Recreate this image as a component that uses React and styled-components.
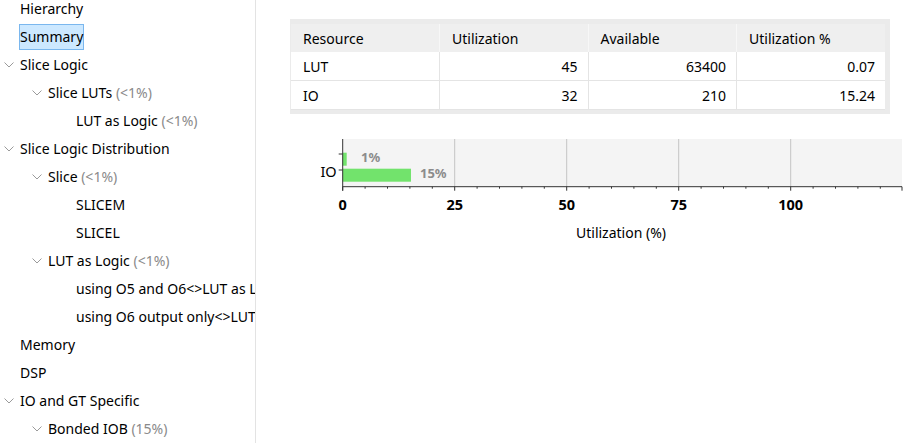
import React from 'react';
import styled, { createGlobalStyle } from 'styled-components';

const Global = createGlobalStyle`
  html, body { margin: 0; padding: 0; background: #fff; }
  body { font-family: "Noto Sans", "Open Sans", sans-serif; color: #000; overflow: hidden; }
`;

const Page = styled.div`
  display: flex;
  width: 924px;
  height: 443px;
  overflow: hidden;
`;

const Sidebar = styled.div`
  width: 255px;
  flex: none;
  border-right: 1px solid #e3e3e3;
  overflow: hidden;
`;

const Tree = styled.ul`
  list-style: none;
  margin: -5px 0 0 0;
  padding: 0;
`;

const Node = styled.li`
  height: 28px;
  display: flex;
  align-items: center;
  padding-left: ${p => 4 + p.$level * 28}px;
  font-size: 14px;
  white-space: nowrap;
`;

const Chevron = styled.span`
  width: 16px;
  flex: none;
  display: inline-flex;
  justify-content: flex-start;
  svg { display: block; }
`;

const Label = styled.span`
  flex: none;
  padding: 2px 0;
  line-height: 20px;
  border: 1px solid transparent;
  margin-left: -1px;
  ${p => p.$selected && `
    background: #cce8ff;
    border-color: #7ab7ee;
  `}
`;

const Pct = styled.span`
  color: #8a8a8a;
`;

const Main = styled.div`
  flex: 1;
  padding: 19px 0 0 34px;
  display: flex;
  flex-direction: column;
`;

const Frame = styled.div`
  width: 594px;
  background: #ebebeb;
  padding: 5px 5px 4px 1px;
`;

const Table = styled.table`
  border-collapse: collapse;
  width: 100%;
  font-size: 14px;
  table-layout: fixed;
`;

const Th = styled.th`
  text-align: left;
  font-weight: normal;
  height: 28px;
  padding: 0 12px;
  background: #efefef;
  border-left: 1px solid #f7f7f7;
  &:first-child { border-left: none; }
`;

const Td = styled.td`
  height: 28px;
  padding: 0 10px 0 12px;
  background: #fff;
  text-align: ${p => (p.$num ? 'right' : 'left')};
  border-left: 1px solid #e4e4e4;
  border-bottom: 1px solid #e4e4e4;
  &:first-child { border-left: none; }
`;

const ChartBox = styled.div`
  margin: 16px 0 0 20px;
  svg { display: block; }
`;

const Chev = () => (
  <Chevron>
    <svg width="10" height="6" viewBox="0 0 10 6">
      <polyline points="0.5,0.5 5,5 9.5,0.5" fill="none" stroke="#9a9a9a" strokeWidth="1" />
    </svg>
  </Chevron>
);

const tree = [
  { level: 0, text: 'Hierarchy' },
  { level: 0, text: 'Summary', selected: true },
  { level: 0, text: 'Slice Logic', open: true },
  { level: 1, text: 'Slice LUTs', pct: '(<1%)', open: true },
  { level: 2, text: 'LUT as Logic', pct: '(<1%)' },
  { level: 0, text: 'Slice Logic Distribution', open: true },
  { level: 1, text: 'Slice', pct: '(<1%)', open: true },
  { level: 2, text: 'SLICEM' },
  { level: 2, text: 'SLICEL' },
  { level: 1, text: 'LUT as Logic', pct: '(<1%)', open: true },
  { level: 2, text: 'using O5 and O6<>LUT as Logic' },
  { level: 2, text: 'using O6 output only<>LUT as Logic' },
  { level: 0, text: 'Memory' },
  { level: 0, text: 'DSP' },
  { level: 0, text: 'IO and GT Specific', open: true },
  { level: 1, text: 'Bonded IOB', pct: '(15%)', open: true },
];

const rows = [
  ['LUT', 45, 63400, '0.07'],
  ['IO', 32, 210, '15.24'],
];

const Chart = () => {
  const x0 = 32.7;
  const scale = 4.48;
  const top = 9;
  const bottom = 56.7;
  const right = 592;
  const majors = [0, 25, 50, 75, 100];
  const minors = [];
  for (let v = 5; v < 125; v += 5) if (v % 25) minors.push(v);
  const font = '"Noto Sans", "Open Sans", sans-serif';
  return (
    <svg width="604" height="115" viewBox="0 0 604 115">
      <rect x={x0} y={top} width={right - x0} height={bottom - top} fill="#f4f4f4" />
      {majors.slice(1).map(v => (
        <line key={v} x1={x0 + v * scale} x2={x0 + v * scale} y1={top} y2={bottom} stroke="#c4c4c4" />
      ))}
      <rect x={x0} y={22.7} width={4} height={13} fill="#72e36c" />
      <rect x={x0} y={38.7} width={15.24 * scale} height={13} fill="#72e36c" />
      <text x={51} y={32} fontFamily={font} fontSize="13" fontWeight="bold" fill="#8c8c8c">1%</text>
      <text x={110} y={48} fontFamily={font} fontSize="13" fontWeight="bold" fill="#8c8c8c">15%</text>
      <line x1={x0} x2={x0} y1={top} y2={bottom + 4} stroke="#333" />
      <line x1={x0} x2={right} y1={bottom} y2={bottom} stroke="#333" />
      <line x1={right} x2={right} y1={bottom} y2={bottom + 4} stroke="#333" />
      <line x1={x0 - 4} x2={x0} y1={24} y2={24} stroke="#333" />
      <line x1={x0 - 4} x2={x0} y1={40} y2={40} stroke="#333" />
      {minors.map(v => (
        <line key={v} x1={x0 + v * scale} x2={x0 + v * scale} y1={bottom} y2={bottom + 2} stroke="#333" />
      ))}
      {majors.map(v => (
        <g key={v}>
          <line x1={x0 + v * scale} x2={x0 + v * scale} y1={bottom} y2={bottom + 4} stroke="#333" />
          <text x={x0 + v * scale} y={80} textAnchor="middle" fontFamily={font} fontSize="14.5" fontWeight="bold" fill="#000">{v}</text>
        </g>
      ))}
      <text x={x0 - 6} y={47} textAnchor="end" fontFamily={font} fontSize="14.5" fill="#000">IO</text>
      <text x={311} y={108} textAnchor="middle" fontFamily={font} fontSize="14" fill="#000">Utilization (%)</text>
    </svg>
  );
};

export default function App() {
  return (
    <Page>
      <Global />
      <Sidebar>
        <Tree>
          {tree.map((n, i) => (
            <Node key={i} $level={n.level}>
              {n.open ? <Chev /> : <Chevron />}
              <Label $selected={n.selected}>
                {n.text}
                {n.pct && <Pct> {n.pct}</Pct>}
              </Label>
            </Node>
          ))}
        </Tree>
      </Sidebar>
      <Main>
        <Frame>
          <Table>
            <thead>
              <tr>
                <Th>Resource</Th>
                <Th>Utilization</Th>
                <Th>Available</Th>
                <Th>Utilization %</Th>
              </tr>
            </thead>
            <tbody>
              {rows.map(r => (
                <tr key={r[0]}>
                  <Td>{r[0]}</Td>
                  <Td $num>{r[1]}</Td>
                  <Td $num>{r[2]}</Td>
                  <Td $num>{r[3]}</Td>
                </tr>
              ))}
            </tbody>
          </Table>
        </Frame>
        <ChartBox>
          <Chart />
        </ChartBox>
      </Main>
    </Page>
  );
}
